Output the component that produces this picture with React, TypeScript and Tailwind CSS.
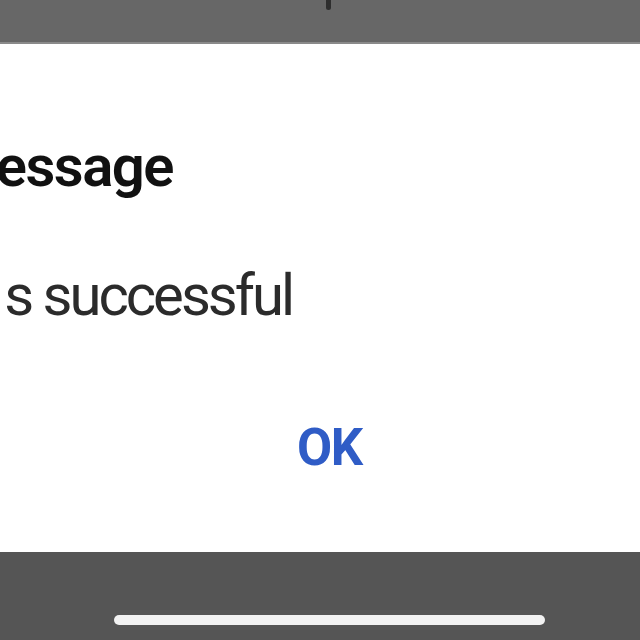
export default function App() {
  return (
    <div
      className="w-[640px] h-[640px] flex flex-col overflow-hidden bg-white"
      style={{ fontFamily: 'Roboto, "Noto Sans", sans-serif' }}
    >
      {/* dimmed status area behind the dialog */}
      <div className="h-[44px] bg-[#676767] flex justify-center border-b-2 border-[#8a8a8a]">
        <div className="ml-[17px] w-[5px] h-[10px] rounded-b-sm bg-[#2e2e2e]" />
      </div>

      {/* dialog */}
      <div className="flex-1 flex flex-col bg-white">
        <div className="mt-[93px] w-[173px] flex justify-end">
          <h1 className="whitespace-nowrap text-[58px] leading-[58px] font-semibold text-[#111] tracking-[-1.5px]">
            Message
          </h1>
        </div>
        <div className="mt-[71px] w-[292px] flex justify-end">
          <p className="whitespace-nowrap text-[58px] leading-[58px] text-[#2b2b2b] tracking-[-3px]">
            <span className="mr-[14px]">Payment i</span>s successful
          </p>
        </div>
        <div className="mt-[98px] pl-[297px]">
          <button className="text-[51px] leading-[51px] font-bold text-[#2f5cc6] tracking-[-1.5px]">
            OK
          </button>
        </div>
      </div>

      {/* navigation bar */}
      <div className="h-[88px] bg-[#555555] flex flex-col items-center">
        <div className="mt-[63px] ml-[19px] w-[431px] h-[10px] rounded-full bg-[#f2f2f2]" />
      </div>
    </div>
  );
}
